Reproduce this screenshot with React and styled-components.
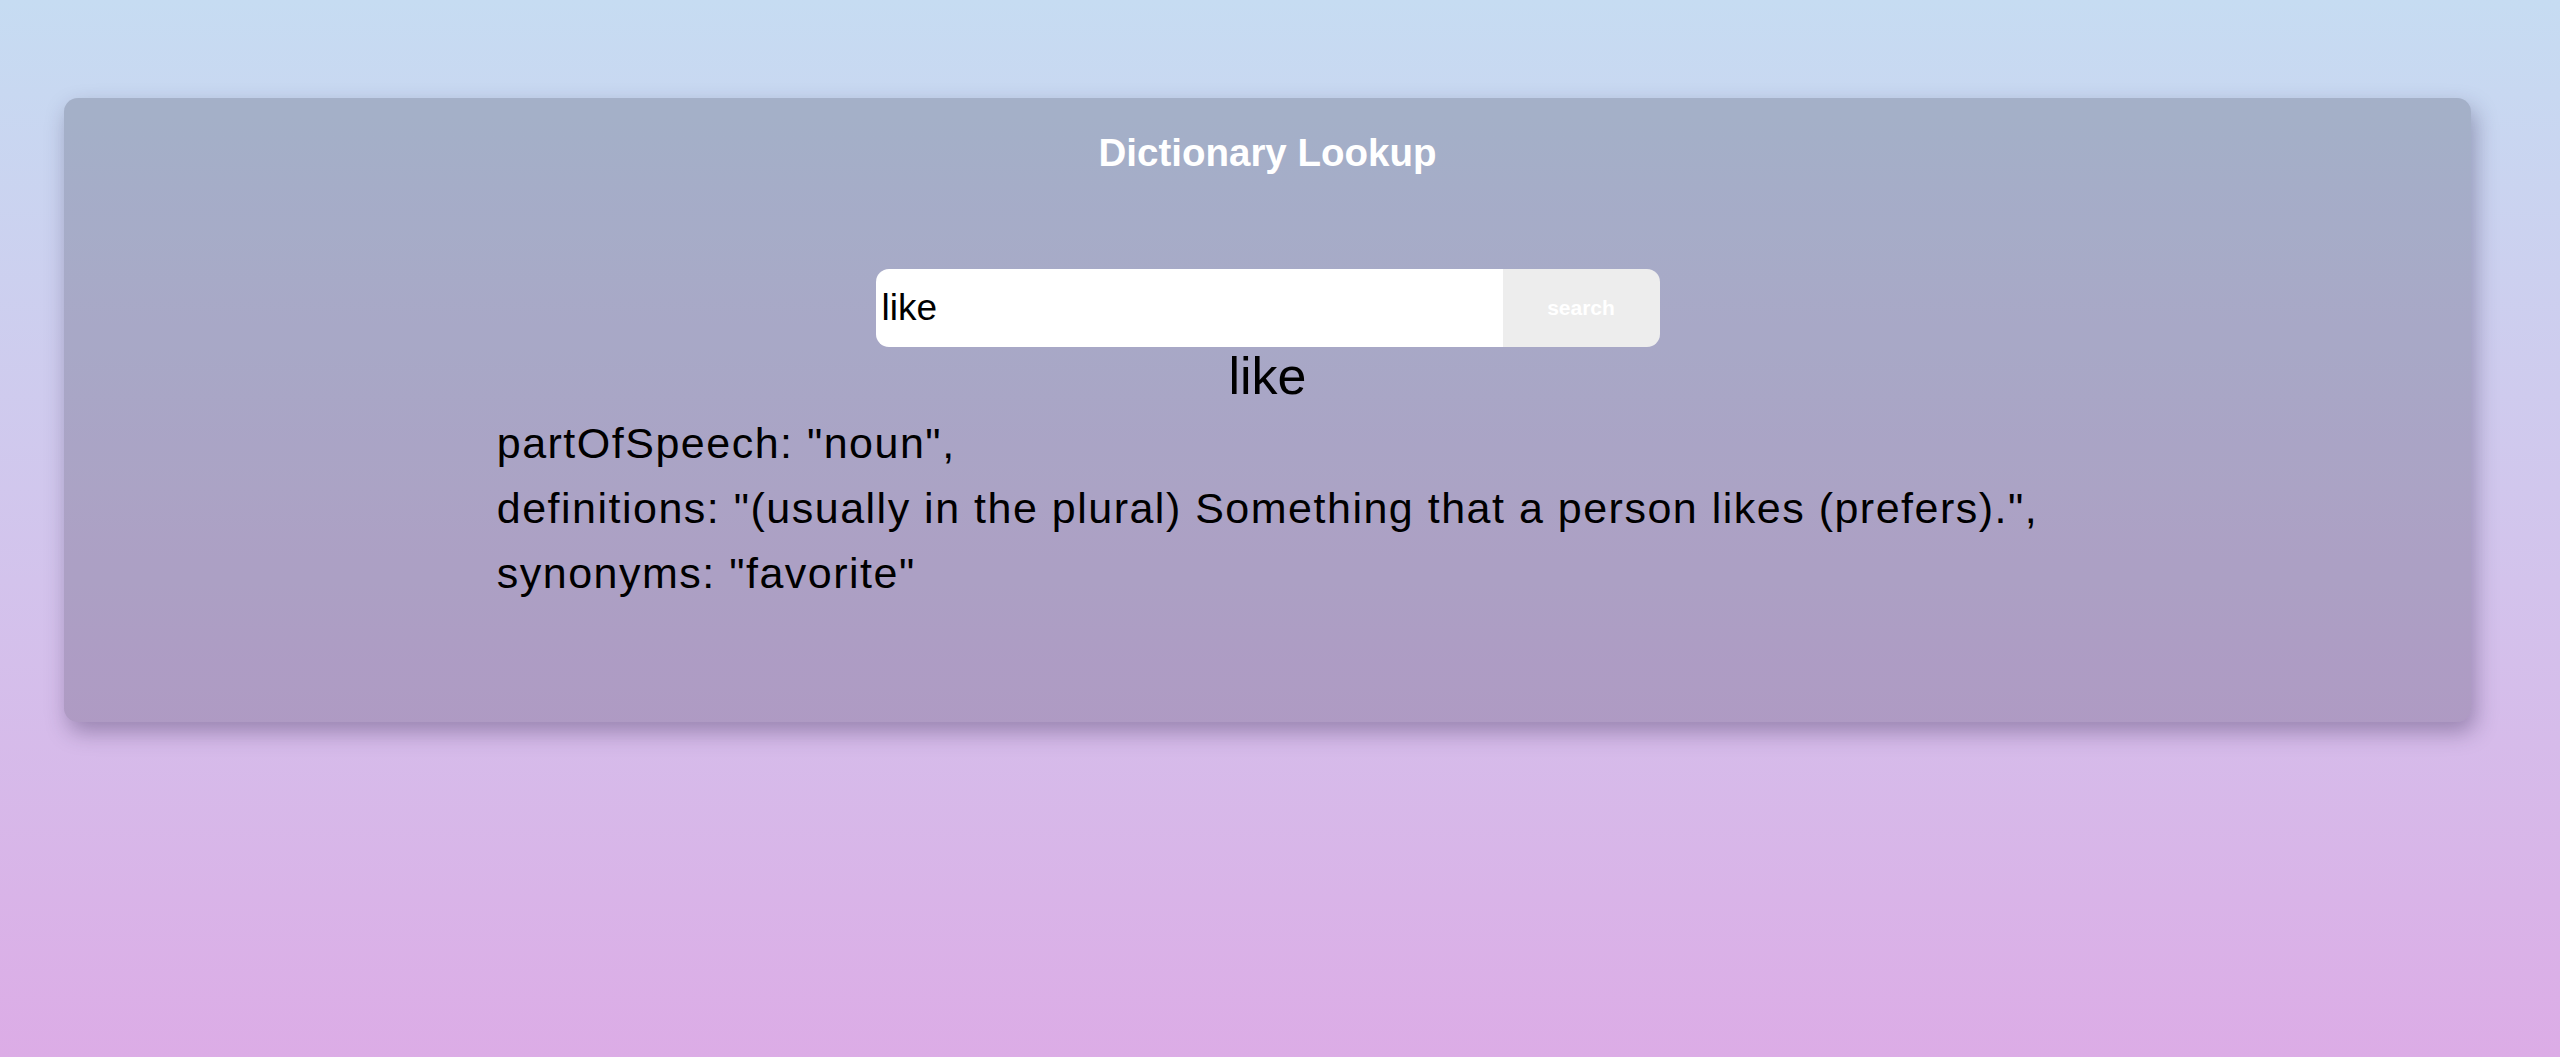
import React, { useState } from 'react'
import styled, { createGlobalStyle } from 'styled-components'

const GlobalStyle = createGlobalStyle`
  html, body {
    margin: 0;
    padding: 0;
  }

  body {
    min-height: 100vh;
    font-family: "Liberation Sans", Arial, sans-serif;
    background: linear-gradient(180deg, #c6dcf2 0%, #d3c3ec 55%, #dcace6 100%);
    background-attachment: fixed;
  }
`

const Page = styled.div`
  min-height: 100vh;
  box-sizing: border-box;
  padding: 98px 89px 0 64px;
`

const Card = styled.div`
  display: flex;
  flex-direction: column;
  align-items: center;
  padding: 33px 0 116px;
  border-radius: 14px;
  background: rgba(20, 20, 40, 0.2);
  box-shadow: 4px 10px 22px rgba(40, 30, 70, 0.35);
`

const Title = styled.h1`
  margin: 0;
  font-size: 38.5px;
  font-weight: 700;
  line-height: 44px;
  color: #fff;
`

const SearchBar = styled.form`
  display: flex;
  width: 784px;
  height: 78px;
  margin-top: 94px;
  border-radius: 13px;
  overflow: hidden;
`

const Field = styled.input`
  flex: 1;
  min-width: 0;
  border: none;
  outline: none;
  padding: 0 6px;
  background: #fff;
  font-family: "Liberation Sans", Arial, sans-serif;
  font-size: 37px;
  color: #000;
`

const Button = styled.button`
  width: 157px;
  border: none;
  background: #ededed;
  color: #fff;
  font-family: "Liberation Sans", Arial, sans-serif;
  font-size: 21px;
  font-weight: 700;
  cursor: pointer;
`

const Word = styled.h2`
  margin: 0;
  font-size: 52px;
  font-weight: 400;
  line-height: 58px;
  color: #000;
`

const Meaning = styled.div`
  margin-top: 6px;
  font-size: 43px;
  letter-spacing: 1.5px;
  line-height: 65px;
  color: #000;
  text-align: left;
`

const Line = styled.div`
  white-space: nowrap;
`

const entry = {
  word: 'like',
  partOfSpeech: 'noun',
  definitions: '(usually in the plural) Something that a person likes (prefers).',
  synonyms: 'favorite'
}

const App = () => {
  const [query, setQuery] = useState('like')

  return (
    <Page>
      <GlobalStyle />
      <Card>
        <Title>Dictionary Lookup</Title>
        <SearchBar onSubmit={e => e.preventDefault()}>
          <Field value={query} onChange={e => setQuery(e.target.value)} />
          <Button type="submit">search</Button>
        </SearchBar>
        <Word>{entry.word}</Word>
        <Meaning>
          <Line>{`partOfSpeech: "${entry.partOfSpeech}",`}</Line>
          <Line>{`definitions: "${entry.definitions}",`}</Line>
          <Line>{`synonyms: "${entry.synonyms}"`}</Line>
        </Meaning>
      </Card>
    </Page>
  )
}

export default App
